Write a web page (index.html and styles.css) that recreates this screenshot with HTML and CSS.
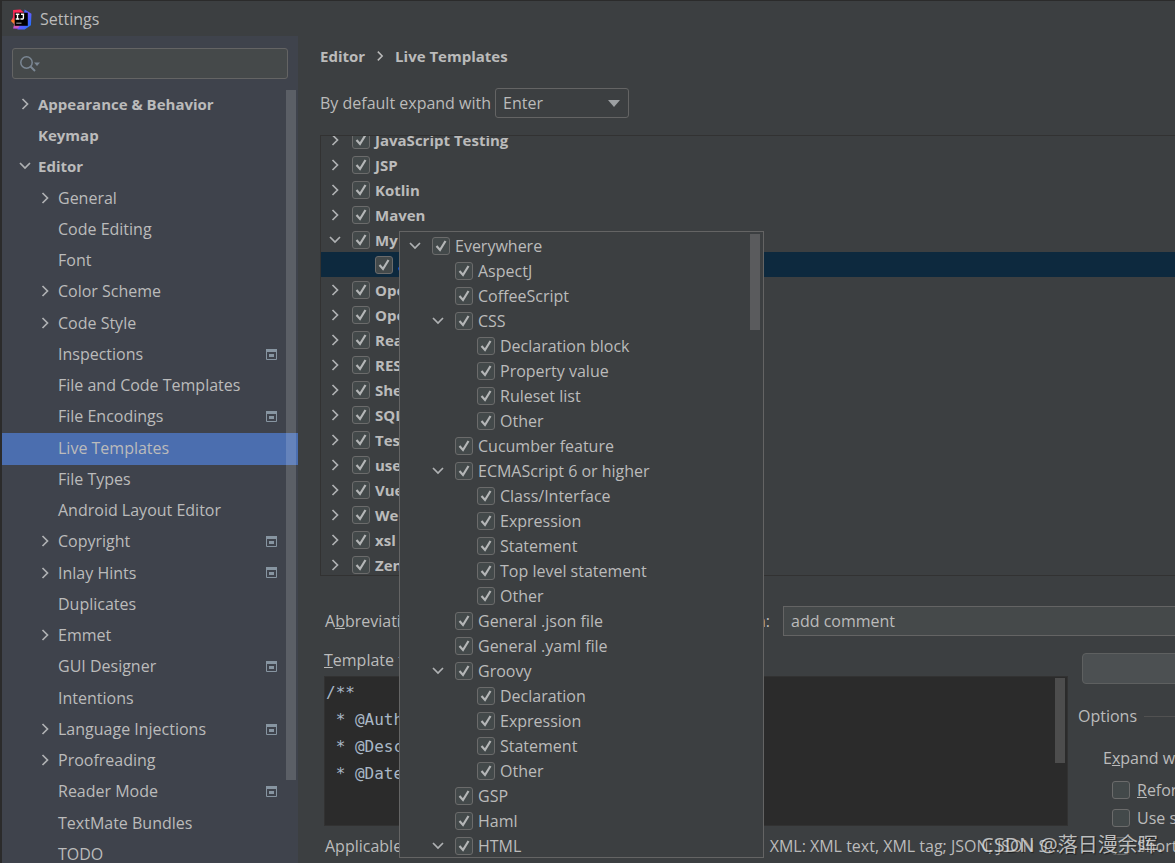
FILE: index.html
```html
<!DOCTYPE html>
<html lang="en">
<head>
<meta charset="utf-8">
<title>Settings</title>
<link rel="stylesheet" href="styles.css">
</head>
<body>
<svg class="defs" aria-hidden="true">
  <symbol id="right" viewBox="0 0 16 16"><path d="M5.500 3 10.500 8l-5 5" fill="none" stroke="currentColor" stroke-width="1.700"/></symbol>
  <symbol id="down" viewBox="0 0 16 16"><path d="M3 5 8 10l5-5" fill="none" stroke="currentColor" stroke-width="1.700"/></symbol>
  <symbol id="scope" viewBox="0 0 11 11"><path d="M.5 2.500h10v8H.5z" fill="none" stroke="#8795a1"/><path d="M0 0h11v3H0z" fill="#8795a1"/><path d="M3 5h5v3H3z" fill="#8795a1"/></symbol>
</svg>
<div class="window">
  <header class="titlebar">
    <svg class="logo" viewBox="0 0 20 20"><defs><linearGradient id="lg1" x1="0" y1="0" x2="0" y2="1"><stop offset="0" stop-color="#fe2857"/><stop offset=".45" stop-color="#fe315d"/><stop offset=".6" stop-color="#fc801d"/><stop offset="1" stop-color="#b74af7"/></linearGradient><linearGradient id="lg2" x1="0" y1="0" x2="1" y2="1"><stop offset="0" stop-color="#087cfa"/><stop offset=".5" stop-color="#6b57ff"/><stop offset="1" stop-color="#087cfa"/></linearGradient></defs><path d="M2 1 9 .5l4 3.500v15L2 18.500l1-4-3-3 2-4z" fill="url(#lg1)"/><path d="m13 .5 6.500 4-.5 11-6 4H6l5-8z" fill="url(#lg2)"/><path d="M3.500 3.500H16V16H3.500z" fill="#000"/><path d="M4.500 5h3.500M6.200 5v4.500M4.500 9.500h3.500M9.500 5h3M11.800 5v3.500q0 1.200-1.500 1H9" fill="none" stroke="#fff" stroke-width="1.300"/><path d="M5 13.500h5" stroke="#aaa" stroke-width="1"/></svg>
    <span>Settings</span>
  </header>
  <div class="content">
    <aside class="sidebar">
      <div class="search">
        <svg class="search-icon" viewBox="0 0 20 16"><circle cx="6.500" cy="6.500" r="5.700" fill="none" stroke="#7b8794" stroke-width="1.500"/><path d="m10.500 10.500 4.500 4.500" stroke="#7b8794" stroke-width="2"/><path d="M14 6.500h6l-3 3.500z" fill="#7b8794"/></svg>
        <input type="text" aria-label="Search settings">
      </div>
      <div class="nav-wrap">
        <ul class="nav" id="nav"></ul>
        <div class="nav-thumb"></div>
      </div>
    </aside>
    <main class="main">
      <h1 class="crumbs"><span>Editor</span><svg class="crumb-arrow"><use href="#right"/></svg><span>Live Templates</span></h1>
      <div class="expand-row">
        <label for="expand">By default expand with</label>
        <span class="select"><select id="expand"><option>Enter</option><option>Tab</option><option>Space</option></select><svg viewBox="0 0 12 7"><path d="M0 0h12L6 7z" fill="#9da0a3"/></svg></span>
      </div>
      <div class="tree"><ul class="rows groups" id="groups"></ul></div>
      <div class="abbr-row">
        <label for="abbr">A<u>b</u>breviation:</label>
        <input id="abbr" type="text" value="a">
        <label class="desc-label" for="desc">Description:</label>
        <input class="desc" id="desc" type="text" value="add comment">
      </div>
      <div class="lower">
        <div class="template">
          <label class="template-label" for="code"><u>T</u>emplate text:</label>
          <div class="editor">
            <textarea id="code" spellcheck="false">/**
 * @Author
 * @Description
 * @Date</textarea>
            <div class="editor-thumb"></div>
          </div>
          <div class="context"><span>Applicable in Java; Java: statement, expression;</span><span>XML: XML text, XML tag; JSON; JSON S...</span></div>
        </div>
        <div class="side">
          <button class="edit" type="button" aria-label="Edit variables"></button>
          <fieldset class="options">
            <legend><span>Options</span></legend>
            <div class="opt-label">E<u>x</u>pand with</div>
            <label class="opt"><input type="checkbox"><span><u>R</u>eformat according to style</span></label>
            <label class="opt"><input type="checkbox"><span>Use static import if possible</span></label>
            <label class="opt"><input type="checkbox"><span>Shorten FQ names</span></label>
          </fieldset>
        </div>
      </div>
      <div class="popup"><ul class="rows" id="contexts"></ul><div class="popup-thumb"></div></div>
    </main>
  </div>
  <div class="watermark">CSDN @落日漫余晖.</div>
</div>
<script src="app.js"></script>
</body>
</html>
```
FILE: styles.css
```css
* { box-sizing: border-box; }
body {
  margin: 0;
  background: #2b2b2b;
  color: #bbbbbb;
  font: 16px/24px "Open Sans", "Noto Sans", sans-serif;
}
ul { list-style: none; margin: 0; padding: 0; }
input, select, textarea, button { font: inherit; color: inherit; }
.defs { position: absolute; width: 0; height: 0; }
.window {
  position: relative;
  display: flex;
  flex-direction: column;
  height: 100vh;
  border-left: 2px solid #2b2b2b;
  border-top: 1px solid #2b2b2b;
  background: #3c3f41;
  overflow: hidden;
}
.titlebar { display: flex; align-items: center; gap: 8px; height: 35px; padding: 1px 0 0 9px; flex: none; }
.logo { width: 21px; height: 21px; }
.content { display: flex; flex: 1; min-height: 0; }

.sidebar { display: flex; flex-direction: column; width: 296px; flex: none; background: #3f434c; }
.search {
  display: flex;
  align-items: center;
  gap: 4px;
  height: 31px;
  margin: 12px 10px 11px;
  padding: 0 7px;
  background: #45494a;
  border: 1px solid #646464;
  border-radius: 3px;
}
.search-icon { width: 20px; height: 16px; flex: none; }
.search input { flex: 1; min-width: 0; background: none; border: 0; outline: 0; }
.nav-wrap { position: relative; flex: 1; min-height: 0; overflow: hidden; }
.nav-item { display: flex; align-items: center; height: 31px; padding: 0 21px 3px 35px; }
.nav-item:nth-child(4n) { height: 32px; }
.nav-item.top { padding-left: 15px; font-size: 15px; font-weight: 700; }
.nav-item.selected { background: #4b6eaf; }
.nav-item a { flex: 1; color: inherit; text-decoration: none; white-space: nowrap; }
.arrow { width: 16px; height: 16px; margin-right: 5px; flex: none; color: #afb1b3; }
.scope { width: 11px; height: 11px; flex: none; }
.nav-thumb { position: absolute; top: 0; right: 2px; width: 10px; height: 690px; background: rgba(255, 255, 255, .15); }

.main { position: relative; display: flex; flex-direction: column; flex: 1; min-width: 0; padding-left: 22px; overflow: hidden; }
.crumbs { display: flex; align-items: center; gap: 7px; margin: 8px 0 20px; font-size: 15px; line-height: 24px; }
.crumb-arrow { width: 16px; height: 14px; }
.expand-row { display: flex; align-items: center; gap: 4px; }
.select { position: relative; }
.select select {
  appearance: none;
  display: block;
  width: 134px;
  height: 30px;
  padding: 0 7px;
  background: #3c3f41;
  border: 1px solid #646464;
  border-radius: 3px;
}
.select svg { position: absolute; right: 9px; top: 12px; width: 12px; height: 7px; pointer-events: none; }
.tree { display: flex; align-items: flex-end; height: 441px; margin-top: 17px; border: 1px solid #323232; border-right: 0; overflow: hidden; flex: none; }
.groups { flex: 1; margin-bottom: -2px; font-size: 15px; font-weight: 700; }
.row { display: flex; align-items: center; height: 25px; padding-left: 6px; white-space: nowrap; }
.row.depth1 { padding-left: 29px; }
.row.depth2 { padding-left: 51px; }
.row.selected { background: #0d293e; color: #589df6; font-weight: 400; }
.row .arrow { margin-right: 9px; }
.row label { display: flex; align-items: center; gap: 5px; }
input[type="checkbox"] {
  appearance: none;
  width: 18px;
  height: 18px;
  margin: 0;
  flex: none;
  background: #43494a;
  border: 1px solid #6b6b6b;
  border-radius: 3px;
}
.check { position: relative; display: flex; }
.check svg { position: absolute; inset: 0; width: 18px; height: 18px; }

.abbr-row { display: flex; align-items: center; gap: 13px; margin: 30px 0 0 5px; flex: none; }
.abbr-row input { width: 229px; height: 30px; padding: 0 7px; background: #45494a; border: 1px solid #646464; outline: 0; }
.abbr-row .desc { flex: 1; min-width: 0; border-right: 0; }
.abbr-row label { width: 95px; white-space: nowrap; flex: none; }
.abbr-row .desc-label { text-align: right; }
.lower { display: flex; gap: 10px; margin-left: 4px; flex: none; }
.template { flex: 1; min-width: 0; }
.template-label { display: block; margin: 12px 0 4px; }
.editor { position: relative; height: 150px; background: #2b2b2b; border: 1px solid #323232; }
.editor textarea {
  display: block;
  width: 100%;
  height: 100%;
  padding: 2px 1px;
  background: none;
  border: 0;
  outline: 0;
  resize: none;
  overflow: hidden;
  color: #a9b7c6;
  font: 16px/27px "DejaVu Sans Mono", monospace;
}
.editor-thumb { position: absolute; top: 1px; right: 2px; width: 10px; height: 85px; background: #4d4d4d; }
.context { display: flex; justify-content: space-between; margin-top: 8px; padding: 0 8px 0 1px; white-space: nowrap; }
.side { width: 97px; flex: none; white-space: nowrap; overflow: hidden; }
.edit { display: block; width: 110px; height: 31px; margin: 17px 0 0 4px; background: #4c5052; border: 1px solid #5e6060; border-radius: 4px; }
.options { min-width: 0; margin: 20px 0 0; padding: 0; border: 0; }
.options legend { display: flex; align-items: center; gap: 7px; width: 100%; padding: 0; }
.options legend::after { content: ""; flex: 1; height: 1px; background: #515151; }
.opt-label { margin: 18px 0 6px 25px; }
.opt { display: flex; align-items: center; gap: 7px; height: 28px; margin-left: 34px; }

.popup {
  position: absolute;
  left: 101px;
  top: 195px;
  width: 365px;
  height: 627px;
  padding: 1px 0 0 1px;
  background: #3c3f41;
  border: 1px solid #646464;
  overflow: hidden;
}
.popup-thumb { position: absolute; top: 2px; right: 3px; width: 10px; height: 96px; background: #5a5b5d; }
.watermark {
  position: absolute;
  right: 12px;
  bottom: 4px;
  color: rgba(235, 235, 235, .75);
  font: 20px/28px "Noto Sans", "Noto Sans CJK SC", sans-serif;
  text-shadow: 1px 1px 1px rgba(0, 0, 0, .5);
}
```
FILE: app.js
```
const icon = (id, cls) => `<svg class="${cls}"><use href="#${id}"/></svg>`;
const arrow = a => a === ">" ? icon("right", "arrow") : a === "v" ? icon("down", "arrow") : '<span class="arrow"></span>';

// [arrow, label, top level, project scope]
const nav = [
  [">", "Appearance &amp; Behavior", 1], ["", "Keymap", 1], ["v", "Editor", 1], [">", "General"],
  ["", "Code Editing"], ["", "Font"], [">", "Color Scheme"], [">", "Code Style"],
  ["", "Inspections", 0, 1], ["", "File and Code Templates"], ["", "File Encodings", 0, 1],
  ["", "Live Templates"], ["", "File Types"], ["", "Android Layout Editor"], [">", "Copyright", 0, 1],
  [">", "Inlay Hints", 0, 1], ["", "Duplicates"], [">", "Emmet"], ["", "GUI Designer", 0, 1],
  ["", "Intentions"], [">", "Language Injections", 0, 1], [">", "Proofreading"],
  ["", "Reader Mode", 0, 1], ["", "TextMate Bundles"], ["", "TODO"]
];
document.getElementById("nav").innerHTML = nav.map(([a, t, top, scope]) =>
  `<li class="nav-item${top ? " top" : ""}${t === "Live Templates" ? " selected" : ""}">${arrow(a)}<a href="#">${t}</a>${scope ? icon("scope", "scope") : ""}</li>`).join("");

const tick = '<svg viewBox="0 0 18 18"><path d="m4.500 9 3.500 4 5.500-9" fill="none" stroke="#b4b6b7" stroke-width="2.200"/></svg>';
const row = ([depth, a, t, sel]) =>
  `<li class="row depth${depth}${sel ? " selected" : ""}">${depth === 1 && !a && sel ? '<span class="arrow lead"></span>' : arrow(a)}<label><span class="check"><input type="checkbox" checked>${tick}</span><span>${t}</span></label></li>`;

document.getElementById("groups").innerHTML = [
  [0, ">", "JavaScript Testing"], [0, ">", "JSP"], [0, ">", "Kotlin"], [0, ">", "Maven"], [0, "v", "My"],
  [1, "", "a", 1], [0, ">", "OpenAPI"], [0, ">", "OpenAPI"], [0, ">", "React"], [0, ">", "REST"],
  [0, ">", "Shell Script"], [0, ">", "SQL"], [0, ">", "Test"], [0, ">", "user"], [0, ">", "Vue"],
  [0, ">", "Web Services"], [0, ">", "xsl"], [0, ">", "Zen HTML"]
].map(row).join("");

document.getElementById("contexts").innerHTML = [
  [0, "v", "Everywhere"], [1, "", "AspectJ"], [1, "", "CoffeeScript"], [1, "v", "CSS"],
  [2, "", "Declaration block"], [2, "", "Property value"], [2, "", "Ruleset list"], [2, "", "Other"],
  [1, "", "Cucumber feature"], [1, "v", "ECMAScript 6 or higher"], [2, "", "Class/Interface"],
  [2, "", "Expression"], [2, "", "Statement"], [2, "", "Top level statement"], [2, "", "Other"],
  [1, "", "General .json file"], [1, "", "General .yaml file"], [1, "v", "Groovy"],
  [2, "", "Declaration"], [2, "", "Expression"], [2, "", "Statement"], [2, "", "Other"],
  [1, "", "GSP"], [1, "", "Haml"], [1, "v", "HTML"]
].map(row).join("");
```
